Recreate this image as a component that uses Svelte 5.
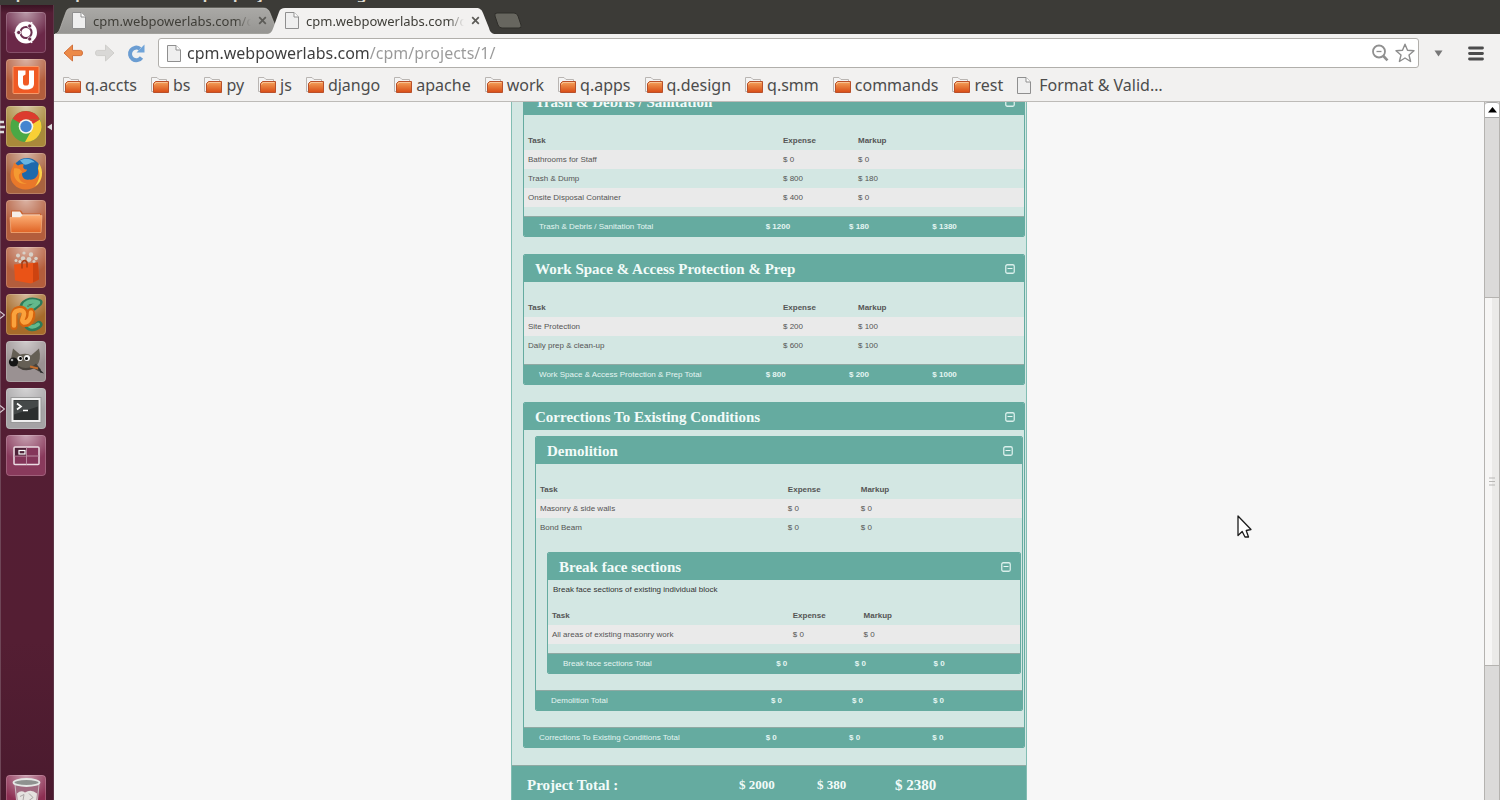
<script>
  const bookmarks = [
    'q.accts', 'bs', 'py', 'js', 'django', 'apache', 'work', 'q.apps',
    'q.design', 'q.smm', 'commands', 'rest'
  ];

  const apps = [
    { id: 'dash', name: 'Dash' },
    { id: 'one', name: 'Ubuntu One' },
    { id: 'chrome', name: 'Google Chrome' },
    { id: 'firefox', name: 'Firefox' },
    { id: 'files', name: 'Files' },
    { id: 'software', name: 'Software Centre' },
    { id: 'pycharm', name: 'PyCharm' },
    { id: 'gimp', name: 'GIMP' },
    { id: 'terminal', name: 'Terminal' },
    { id: 'workspaces', name: 'Workspaces' },
    { id: 'bin', name: 'Rubbish Bin' }
  ];

  const sections = [
    {
      title: 'Trash & Debris / Sanitation',
      tasks: [
        ['Bathrooms for Staff', 0, 0],
        ['Trash & Dump', 800, 180],
        ['Onsite Disposal Container', 400, 0]
      ],
      totals: [1200, 180, 1380]
    },
    {
      title: 'Work Space & Access Protection & Prep',
      tasks: [
        ['Site Protection', 200, 100],
        ['Daily prep & clean-up', 600, 100]
      ],
      totals: [800, 200, 1000]
    },
    {
      title: 'Corrections To Existing Conditions',
      totals: [0, 0, 0],
      children: [
        {
          title: 'Demolition',
          tasks: [
            ['Masonry & side walls', 0, 0],
            ['Bond Beam', 0, 0]
          ],
          totals: [0, 0, 0],
          children: [
            {
              title: 'Break face sections',
              note: 'Break face sections of existing individual block',
              tasks: [['All areas of existing masonry work', 0, 0]],
              totals: [0, 0, 0]
            }
          ]
        }
      ]
    }
  ];
</script>

{#snippet pageIcon()}
  <svg class="page-icon" width="14" height="17" viewBox="0 0 14 17" aria-hidden="true">
    <path d="M1 .5H9L13.5 5V16.5H.5V.5Z" fill="#efefef" stroke="#8f8f8f" />
    <path d="M9 .5V5H13.5" fill="#fff" stroke="#8f8f8f" />
  </svg>
{/snippet}

{#snippet tab(active)}
  <div class="tab" class:active>
    <svg class="tab-shape" viewBox="0 0 228 27" preserveAspectRatio="none" aria-hidden="true">
      <path
        d="M0 27C4 26 5 22 7 16L11 5C12 2 14 1 17 1H208C212 1 214 3 215 6L221 21C222 25 224 27 228 27Z"
        fill={active ? '#f2f1f0' : 'url(#tabgrey)'}
        stroke={active ? 'none' : '#c4c3be'}
        stroke-width="0.6"
      />
    </svg>
    {@render pageIcon()}
    <button class="tab-label">cpm.webpowerlabs.com/c</button>
    <button class="tab-close" aria-label="Close tab">
      <svg width="9" height="9" viewBox="0 0 9 9"><path d="M1.2 1.2L7.8 7.8M7.8 1.2L1.2 7.8" stroke="#5c5b57" stroke-width="1.7" /></svg>
    </button>
  </div>
{/snippet}

{#snippet panel(s)}
  <section class="panel">
    <header>
      <h2>{s.title}</h2>
      <button aria-label="Collapse {s.title}">
        <svg width="10" height="10" viewBox="0 0 10 10">
          <rect x=".75" y=".75" width="8.5" height="8.5" rx="1.5" fill="none" stroke="#d9efeb" stroke-width="1.3" />
          <path d="M2.5 4.5H7.5" stroke="#e8f6f3" stroke-width="1.1" />
        </svg>
      </button>
    </header>
    {#if s.note}<p>{s.note}</p>{/if}
    {#if s.tasks}
      <table class:noted={s.note}>
        <thead>
          <tr><th>Task</th><th>Expense</th><th>Markup</th></tr>
        </thead>
        <tbody>
          {#each s.tasks as [name, expense, markup]}
            <tr><td>{name}</td><td>$ {expense}</td><td>$ {markup}</td></tr>
          {/each}
        </tbody>
      </table>
    {/if}
    {#each s.children ?? [] as child}
      {@render panel(child)}
    {/each}
    <footer>
      <span>{s.title} Total</span>
      {#each s.totals as t}<b>$ {t}</b>{/each}
    </footer>
  </section>
{/snippet}

<div class="desktop">
  <div class="menubar">cpm.webpowerlabs.com/cpm/projects/1/ - Google Chrome</div>

  <nav class="launcher" aria-label="Launcher">
    {#each apps as app}
      <button class="app {app.id}" aria-label={app.name}>
        {#if app.id === 'dash'}
          <svg viewBox="0 0 40 40">
            <circle cx="20" cy="20" r="11" fill="#fff" />
            <circle cx="20" cy="20" r="5.6" fill="none" stroke="#6b3050" stroke-width="2" />
            <path d="M8.5 20H15M23 14.5L26 9.5M23 25.5L26 30.5" stroke="#fff" stroke-width="1.4" />
            <g fill="#6b3050" stroke="#fff" stroke-width=".8">
              <circle cx="12.7" cy="20" r="2.1" />
              <circle cx="23.7" cy="13.5" r="2.1" />
              <circle cx="23.7" cy="26.5" r="2.1" />
            </g>
          </svg>
        {:else if app.id === 'one'}
          <svg viewBox="0 0 40 40">
            <rect x="7" y="7" width="26" height="27" rx="1" fill="#f05a24" stroke="#f79a6a" />
            <path d="M12 11H17V23C17 25.5 18 26 20 26S23 25.5 23 23V11H28V24C28 28.5 25 30 20 30S12 28.5 12 24Z" fill="#fff" />
            <path d="M17 11H19.5V15L17 16.5Z" fill="#fff" />
          </svg>
        {:else if app.id === 'chrome'}
          <svg viewBox="0 0 40 40">
            <circle cx="20" cy="20" r="15.5" fill="#4aa845" />
            <path d="M20 20L6.6 12.2A15.5 15.5 0 0 1 33.8 13H20Z" fill="#dc3c2e" />
            <path d="M26 17L33.8 13A15.5 15.5 0 0 1 19 35.5L26 23Z" fill="#f8cf35" />
            <path d="M20 13H33.8L26 18Z" fill="#dc3c2e" />
            <circle cx="20" cy="20" r="7.3" fill="#f5f5ee" />
            <circle cx="20" cy="20" r="5.7" fill="#4384cf" />
          </svg>
        {:else if app.id === 'firefox'}
          <svg viewBox="0 0 40 40">
            <circle cx="21" cy="19" r="14.5" fill="#1d69ac" />
            <path d="M14 7C19 4 26 5 29 9C24 8 23 12 18 11Z" fill="#67b5e2" />
            <path d="M33 10C37 17 37 27 31 32C24 38 13 37 8 31C3 26 4 17 7 13L8 9L12 12C15 10 18 11 18 11C16 14 18 16 21 16C21 18 18 19 16 20C16 24 19 27 23 26C28 27 33 23 32 17Z" fill="#e9782a" />
            <path d="M33 10C38 17 37 28 29 33C33 27 35 21 32 15Z" fill="#fad24a" />
            <path d="M8 15C11 14 14 15 16 18L13 21C12 26 16 30 21 30C13 32 6 25 8 15Z" fill="#f59a31" />
          </svg>
        {:else if app.id === 'files'}
          <svg viewBox="0 0 40 40">
            <path d="M5 31V10H15L17 13H35V31Z" fill="#c9602b" />
            <path d="M6 17V11H14L16 14H34V18Z" fill="#f5eee8" />
            <path d="M4 17H14L17 15H36L35 32H5Z" fill="url(#folder)" stroke="#f9b582" stroke-width=".7" />
          </svg>
        {:else if app.id === 'software'}
          <svg viewBox="0 0 40 40">
            <g fill="#d8d1c8">
              <circle cx="12" cy="8" r="2" /><circle cx="18" cy="5.5" r="1.6" /><circle cx="25" cy="7" r="2.2" />
              <circle cx="30" cy="11" r="1.8" /><circle cx="17" cy="11" r="2.2" /><circle cx="23" cy="12" r="2.4" /><circle cx="10" cy="13" r="1.5" />
              <circle cx="28" cy="14" r="1.5" /><circle cx="14" cy="14" r="1.6" />
            </g>
            <path d="M8 17L32 15L33 32L25 36L9 33Z" fill="#ea5317" />
            <path d="M27 16L32 15L33 32L27 35Z" fill="#cd4310" />
            <path d="M16 21V15Q18.5 11 21 15V20" fill="none" stroke="#a83c12" stroke-width="1.5" />
          </svg>
        {:else if app.id === 'pycharm'}
          <svg viewBox="0 0 40 40" fill="none" stroke-linecap="round">
            <path d="M33 8C24 4 16 9 17 14C18 18 26 15 32 9" stroke="#2d7a58" stroke-width="7" />
            <path d="M32 8C24 5 17 9 19 14C21 16 26 13 31 9" stroke="#63b98c" stroke-width="4.5" />
            <path d="M33 30C28 35 22 34 21 29" stroke="#2d7a58" stroke-width="7" />
            <path d="M32 30C28 33 24 33 22 30" stroke="#63b98c" stroke-width="4" />
            <path d="M8 32V20C9 13 19 13 19 19C19 24 14 27 18 29C25 30 27 21 25 17" stroke="#d6640e" stroke-width="7" />
            <path d="M8 31V20C9 15 18 14 18 19C18 24 14 26 18 28C23 28 25 23 25 18" stroke="#fba23c" stroke-width="4.5" />
          </svg>
        {:else if app.id === 'gimp'}
          <svg viewBox="0 0 40 40">
            <path d="M7 7L14 13Q21 11 25 14L33 7Q36 19 30 25Q22 31 12 25L4 22Z" fill="#655f55" />
            <path d="M12 24Q21 30 30 22L35 28L33 30L28 27Q19 31 12 26Z" fill="#47423c" />
            <circle cx="7.5" cy="20.5" r="4.6" fill="#141414" /><circle cx="6" cy="18.5" r="1.3" fill="#aaa" />
            <circle cx="14" cy="17" r="2.6" fill="#f4f4f4" /><circle cx="21" cy="16.5" r="3" fill="#f4f4f4" />
            <circle cx="14.5" cy="17" r="1.4" /><circle cx="20.5" cy="17" r="1.5" />
            <path d="M24 25L32 27" stroke="#c46d2c" stroke-width="2" />
            <path d="M32 26L38 32L34 31Z" fill="#2c2c2c" />
          </svg>
        {:else if app.id === 'terminal'}
          <svg viewBox="0 0 40 40">
            <rect x="5" y="9" width="30" height="25" fill="#f0f0f0" stroke="#999" />
            <rect x="7.5" y="11.5" width="25" height="20" fill="#2c2f2f" />
            <path d="M8 12H32V18L8 26Z" fill="#454949" />
            <path d="M11 15L15 18L11 21" fill="none" stroke="#fff" stroke-width="1.7" /><path d="M17 22H22" stroke="#fff" stroke-width="1.5" />
          </svg>
        {:else if app.id === 'workspaces'}
          <svg viewBox="0 0 40 40" fill="none">
            <rect x="8" y="11.5" width="25" height="17.5" rx="1" fill="#84365a" stroke="#eadbe2" stroke-width="1.5" />
            <path d="M20.5 12V29M8 20.5H33" stroke="#b98ba1" stroke-width="1" />
            <rect x="9" y="12.5" width="11" height="7.5" fill="#4d2238" />
            <rect x="13" y="15" width="6" height="3.5" stroke="#fff" stroke-width="1.2" />
          </svg>
        {:else}
          <svg viewBox="0 0 40 40">
            <path d="M9 9H33L30 40H12Z" fill="#a06a80" stroke="#c9b9bf" />
            <path d="M11 18Q15 14 19 17Q25 13 31 18L29 40H13Z" fill="#e4e2df" />
            <path d="M14 21L18 19L17 25M23 18L27 22L23 25" fill="none" stroke="#aaa5a5" />
            <ellipse cx="20.5" cy="7" rx="13" ry="3.5" fill="#8f9290" stroke="#e5e7e5" stroke-width="1.8" />
          </svg>
        {/if}
        {#if app.id === 'chrome'}
          <svg class="mark triple" viewBox="0 0 5 14"><path d="M0 2H4M0 7H5M0 12H4" stroke="#ddd" stroke-width="2.4" /></svg>
          <svg class="mark current" viewBox="0 0 6 8"><path d="M6 0V8L0 4Z" fill="#ddd" /></svg>
        {:else if app.id === 'pycharm' || app.id === 'terminal'}
          <svg class="mark single" viewBox="0 0 5 8"><path d="M0 .5L4.5 4L0 7.5" fill="none" stroke="#d5c9d0" stroke-width="1.2" /></svg>
        {/if}
      </button>
    {/each}
  </nav>

  <div class="browser">
    <svg width="0" height="0" class="defs" aria-hidden="true">
      <defs>
        <linearGradient id="tabgrey" x2="0" y2="1"><stop stop-color="#aaa9a6" /><stop offset="1" stop-color="#959491" /></linearGradient>
        <linearGradient id="folder" x2="0" y2="1"><stop stop-color="#fcae74" /><stop offset="1" stop-color="#df6325" /></linearGradient>
        <linearGradient id="mark" x2="0" y2="1"><stop stop-color="#f5a45c" /><stop offset="1" stop-color="#d84b15" /></linearGradient>
      </defs>
    </svg>

    <div class="tabs">
      {@render tab(false)}
      {@render tab(true)}
      <button class="newtab" aria-label="New tab">
        <svg width="28" height="17" viewBox="0 0 28 17"><path d="M3 1H20Q23 1 24 4L27 13Q28 16 25 16H8Q5 16 4 13L1 4Q0 1 3 1Z" fill="#67665f" stroke="#2f2e2a" /></svg>
      </button>
    </div>

    <div class="toolbar">
      <button aria-label="Back">
        <svg width="20" height="18" viewBox="0 0 20 18"><path d="M9.5 1L1 9L9.5 17V11.6H17.5Q19.5 11.6 19.5 9T17.5 6.4H9.5Z" fill="#ec8a48" stroke="#d2703a" stroke-linejoin="round" /></svg>
      </button>
      <button aria-label="Forward">
        <svg width="20" height="18" viewBox="0 0 20 18"><path d="M10.5 1L19 9L10.5 17V11.6H2.5Q.5 11.6 .5 9T2.5 6.4H10.5Z" fill="#d9d8d6" stroke="#cfcecb" stroke-linejoin="round" /></svg>
      </button>
      <button class="reload" aria-label="Reload">
        <svg width="18" height="19" viewBox="0 0 18 19"><path d="M14.5 13.5A6.3 6.3 0 1 1 13 4.8" fill="none" stroke="#6b9dd2" stroke-width="4" /><path d="M17.5 .5V8.5H9.5Z" fill="#6fa3d8" /></svg>
      </button>
      <div class="omnibox">
        {@render pageIcon()}
        <input aria-label="Address" value="cpm.webpowerlabs.com/cpm/projects/1/" />
        <button aria-label="Zoom">
          <svg width="18" height="18" viewBox="0 0 18 18" fill="none" stroke="#909090"><circle cx="8" cy="7.5" r="6" stroke-width="1.8" /><path d="M5.5 7.5H10.5" stroke-width="1.3" /><path d="M12.3 12L16.5 16.3" stroke-width="2.6" /></svg>
        </button>
        <button aria-label="Bookmark this page">
          <svg width="20" height="20" viewBox="0 0 20 20"><path d="M10 1.2L12.5 7.3L19 7.8L14 12L15.6 18.5L10 15L4.4 18.5L6 12L1 7.8L7.5 7.3Z" fill="#fff" stroke="#8d8d8d" stroke-width="1.4" stroke-linejoin="round" /></svg>
        </button>
      </div>
      <button class="drop" aria-label="Page actions">
        <svg width="9" height="7" viewBox="0 0 9 7"><path d="M.5 .5H8.5L4.5 6.5Z" fill="#777" /></svg>
      </button>
      <button class="menu" aria-label="Menu">
        <svg width="16" height="15" viewBox="0 0 16 15"><path d="M1.5 2H14.5M1.5 7.5H14.5M1.5 13H14.5" stroke="#4c4c4c" stroke-width="2.8" stroke-linecap="round" /></svg>
      </button>
    </div>

    <div class="bookmarks">
      {#each bookmarks as b}
        <a href="#{b}">
          <svg width="18" height="16" viewBox="0 0 18 16" aria-hidden="true">
            <path d="M.5 14.5V.5H6L8 2.5H15.5V14.5Z" fill="#f4f4f4" stroke="#b9b5b2" />
            <path d="M2.5 15.5V6.5L4.5 4.5H17.5V15.5Z" fill="url(#mark)" stroke="#b9502a" />
            <path d="M3.5 7.5L5 5.5H16.5" fill="none" stroke="#f8c396" />
          </svg>
          {b}
        </a>
      {/each}
      <a class="doc" href="#format">{@render pageIcon()}Format &amp; Valid…</a>
    </div>

    <div class="viewport">
      <main>
        <div class="report">
          {#each sections as s}
            {@render panel(s)}
          {/each}
          <div class="grand">
            <strong>Project Total :</strong>
            <b>$ 2000</b>
            <b>$ 380</b>
            <strong>$ 2380</strong>
          </div>
        </div>
      </main>
      <div class="scrollbar" aria-hidden="true">
        <div class="up"><svg width="9" height="6" viewBox="0 0 9 6"><path d="M4.5 0L9 5.5H0Z" /></svg></div>
        <div></div>
        <div class="thumb"><svg width="6" height="9" viewBox="0 0 6 9"><path d="M0 1H6M0 4.5H6M0 8H6" stroke="#b8b7b5" /></svg></div>
        <div></div>
      </div>
    </div>
  </div>

  <svg class="pointer" width="15" height="23" viewBox="0 0 15 23" aria-hidden="true">
    <path d="M1 1V20.5L5.2 16.5L8 22H11.5L9.2 15.5L14 14.5Z" fill="#fff" stroke="#1c1c1c" stroke-width="1.3" stroke-linejoin="round" />
  </svg>
</div>

<style>
  :global(body) { margin: 0; }
  * { box-sizing: border-box; }
  button { border: 0; padding: 0; background: none; font: inherit; color: inherit; }
  svg { display: block; flex: none; }

  .desktop {
    position: relative;
    display: grid;
    grid-template: 5px minmax(0, 1fr) / 54px minmax(0, 1fr);
    height: 100vh;
    overflow: hidden;
    background: #3c3b37;
    font-family: "Noto Sans", sans-serif;
    color: #4c4c4c;
  }
  .menubar {
    grid-column: 1 / -1;
    display: flex;
    align-items: flex-end;
    height: 2px;
    overflow: hidden;
    padding-left: 8px;
    font-size: 15px;
    line-height: 16px;
    font-weight: 700;
    color: #dfdbd2;
    white-space: nowrap;
  }

  .launcher {
    display: flex;
    flex-direction: column;
    gap: 6px;
    padding: 7px 7px 0 5px;
    min-height: 0;
    background: linear-gradient(#3a1323, #541e35 8px, #541e33 80%, #4a1a2e);
    border-left: 1px solid #6e4657;
    border-right: 1px solid #5d3647;
  }
  .app {
    position: relative;
    flex: none;
    height: 41px;
    border-radius: 4px;
    background: radial-gradient(circle at 50% 0, #ffffff88, #ffffff00 60%), #b35d3c;
    box-shadow: inset 0 0 0 1px #ffffff30;
  }
  .app > svg:first-child { width: 100%; height: 100%; }
  .app.dash { background-color: #6b2848; }
  .app.chrome { background-color: #a9893a; }
  .app.firefox { background-color: #a8623f; }
  .app.pycharm { background-color: #a66b2a; }
  .app.gimp { background-color: #9a9192; }
  .app.terminal { background-color: #a5a3a5; }
  .app.workspaces { background-color: #893a5c; }
  .app.bin { background-color: #8c2e52; margin-top: auto; margin-bottom: -16px; }
  .mark { position: absolute; top: 50%; transform: translateY(-50%); }
  .triple { left: -6px; width: 5px; height: 14px; }
  .current { right: -6px; width: 5px; height: 8px; }
  .single { left: -6px; width: 5px; height: 8px; }

  .browser { display: flex; flex-direction: column; min-width: 0; min-height: 0; }
  .defs { position: absolute; }

  .tabs { display: flex; align-items: flex-end; height: 29px; padding-left: 1px; }
  .tab {
    position: relative;
    display: flex;
    align-items: center;
    gap: 7px;
    flex: none;
    width: 228px;
    height: 27px;
    padding: 0 16px 0 17px;
    font-size: 13px;
    color: #3f3e38;
  }
  .tab + .tab { margin-left: -15px; }
  .tab > :not(.tab-shape) { position: relative; }
  .tab-shape { position: absolute; inset: 0; width: 100%; height: 100%; }
  .tab-label {
    flex: 1;
    min-width: 0;
    overflow: hidden;
    text-align: left;
    white-space: nowrap;
    mask-image: linear-gradient(90deg, #000 90%, transparent);
  }
  .newtab { align-self: center; margin: 2px 0 0 -2px; }

  .toolbar {
    display: flex;
    align-items: center;
    gap: 12px;
    height: 38px;
    padding: 0 16px 0 9px;
    background: #f2f1f0;
  }
  .reload { margin-right: 1px; }
  .omnibox {
    flex: 1;
    display: flex;
    align-items: center;
    gap: 6px;
    min-width: 0;
    height: 30px;
    padding: 0 3px 0 8px;
    border: 1px solid #b1afab;
    border-radius: 3px;
    background: #fff;
  }
  .omnibox input {
    flex: 1;
    min-width: 0;
    border: 0;
    padding: 0;
    outline: 0;
    font: 16px/24px "Noto Sans", sans-serif;
    color: transparent;
    background: linear-gradient(90deg, #3c3c3c 182px, #999 182px);
    background-clip: text;
    -webkit-background-clip: text;
  }
  .drop { margin-left: 3px; }
  .menu { margin-left: 13px; }

  .bookmarks {
    display: flex;
    align-items: center;
    gap: 14px;
    height: 30px;
    padding: 0 9px 3px;
    background: #f2f1f0;
    border-bottom: 1px solid #bdbbb8;
    font-size: 16px;
    line-height: 20px;
    white-space: nowrap;
  }
  .bookmarks a { display: flex; align-items: center; gap: 4px; color: inherit; text-decoration: none; }
  .bookmarks .doc { gap: 8px; }

  .viewport { flex: 1; display: flex; min-height: 0; background: #f7f7f7; }
  main { flex: 1; min-width: 0; overflow: hidden; }
  .report {
    width: 516px;
    max-width: 100%;
    margin: -16px auto 0;
    border: 1px solid #82bdb3;
    background: #d3e7e3;
    font: 8px/10px "Liberation Sans", sans-serif;
    color: #555;
  }
  .panel {
    margin: 0 1px 17px 11px;
    border: 1px solid #65aba0;
    border-radius: 2px;
    overflow: hidden;
  }
  .panel .panel { margin: 6px 1px 16px 11px; }
  .panel header {
    display: flex;
    align-items: center;
    justify-content: space-between;
    height: 27px;
    padding: 0 9px 0 11px;
    background: #65aba0;
    color: #f2fbf9;
  }
  h2, .grand strong { margin: 0; font: 700 15px/18px "Liberation Serif", serif; }
  .panel p { margin: 0; padding: 5px 5px 11px; color: #333; }
  table { width: 100%; margin-top: 16px; border-collapse: collapse; table-layout: fixed; }
  table.noted { margin-top: 0; }
  table:not(:has(+ .panel)) { margin-bottom: 9px; }
  table:has(+ .panel) { margin-bottom: 15px; }
  table + .panel { margin-top: 0; }
  th, td { height: 19px; padding: 0 4px; text-align: left; }
  th:first-child { width: 51%; }
  th:nth-child(2) { width: 15%; }
  tbody tr:nth-child(odd) { background: #eaeaea; }
  .panel footer {
    display: grid;
    grid-template-columns: 290fr 100fr 100fr 110fr;
    align-items: center;
    height: 20px;
    border-top: 1px solid #8fa9a3;
    background: #65aba0;
    color: #e4f5f2;
  }
  footer span { padding-left: 15px; }
  .grand {
    display: grid;
    grid-template-columns: 227fr 78fr 78fr 131fr;
    align-items: center;
    height: 38px;
    border-top: 1px solid #8fa9a3;
    background: #65aba0;
    color: #f2fbf9;
  }
  .grand strong:first-child { padding-left: 15px; }
  .grand b { font: 700 13px/18px "Liberation Serif", serif; }

  .scrollbar {
    display: grid;
    grid-template-rows: 16px 180fr 370fr 134fr;
    width: 16px;
    background: #dbdad9;
    border-left: 1px solid #b5b3b0;
    border-right: 1px solid #b5b3b0;
  }
  .up, .thumb { display: flex; align-items: center; justify-content: center; }
  .up { background: #fff; border: 1px solid #aaa; border-width: 1px 0; border-radius: 3px 3px 0 0; }
  .thumb { background: linear-gradient(90deg, #f7f6f5 50%, #ebeae8 50%); border: 1px solid #b5b3b0; border-width: 1px 0; }

  .pointer { position: absolute; left: 1237px; top: 515px; }
</style>
